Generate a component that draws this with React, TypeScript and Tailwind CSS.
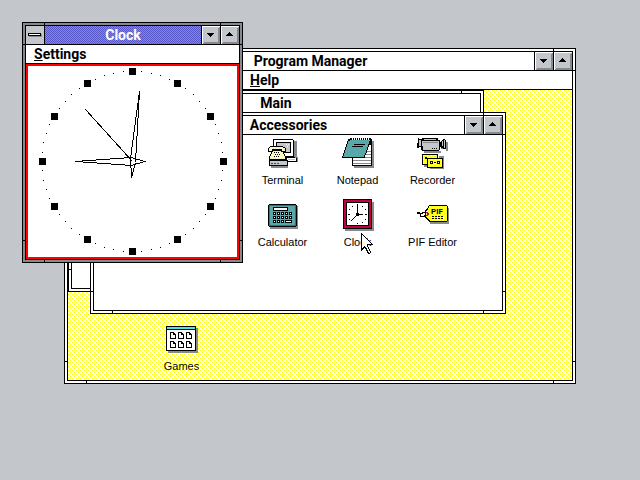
import React from "react";

const INK = "#000000";
const GRAY = "#868a8e";
const SILVER = "#c3c7cb";
const TEAL = "#57a8a8";

function Notches() {
  return (
    <>
      <i className="absolute left-[21px] top-0 h-[3px] w-px bg-black" />
      <i className="absolute right-[21px] top-0 h-[3px] w-px bg-black" />
      <i className="absolute left-[21px] bottom-0 h-[3px] w-px bg-black" />
      <i className="absolute right-[21px] bottom-0 h-[3px] w-px bg-black" />
      <i className="absolute top-[21px] left-0 h-px w-[3px] bg-black" />
      <i className="absolute bottom-[21px] left-0 h-px w-[3px] bg-black" />
      <i className="absolute top-[21px] right-0 h-px w-[3px] bg-black" />
      <i className="absolute bottom-[21px] right-0 h-px w-[3px] bg-black" />
    </>
  );
}

function SystemButton() {
  return (
    <button aria-label="Control menu" className="h-[18px] w-[19px] shrink-0 border-r border-black bg-[#c3c7cb]">
      <svg width="18" height="18" viewBox="0 0 18 18" shapeRendering="crispEdges" aria-hidden="true">
        <path fill={GRAY} d="M3 8h13v3h-13z" />
        <path fill={INK} d="M2 7h13v3h-13z" />
        <path fill="#fff" d="M3 8h11v1h-11z" />
      </svg>
    </button>
  );
}

function ArrowButton({ up = false }: { up?: boolean }) {
  return (
    <button
      aria-label={up ? "Maximize" : "Minimize"}
      className="h-[18px] w-[19px] shrink-0 border-l border-black bg-[#c3c7cb]"
    >
      <svg width="18" height="18" viewBox="0 0 18 18" shapeRendering="crispEdges" aria-hidden="true">
        <path fill="#fff" d="M0 0h18v1h-17v17h-1z" />
        <path fill={GRAY} d="M17 1h1v17h-17v-1h1v-1h14v-14h1z" />
        {up ? (
          <path fill={INK} d="M8 6h1v1h1v1h1v1h1v1h-7v-1h1v-1h1v-1h1z" />
        ) : (
          <path fill={INK} d="M5 7h7v1h-1v1h-1v1h-1v1h-1v-1h-1v-1h-1v-1h-1z" />
        )}
      </svg>
    </button>
  );
}

interface WinProps {
  title: string;
  place: string;
  active?: boolean;
  controls?: boolean;
  children?: React.ReactNode;
}

function Win({ title, place, active = false, controls = true, children }: WinProps) {
  return (
    <section
      aria-label={title}
      className={`absolute border border-black p-[2px] ${active ? "bg-[#868a8e]" : "bg-white"} ${place}`}
    >
      <Notches />
      <div className="flex h-full flex-col border border-black bg-white">
        <header
          className={`flex h-[19px] shrink-0 border-b border-black ${
            active
              ? "bg-[#5757a8] bg-[conic-gradient(#57a8a8_25%,#5757c8_0_50%,#57a8a8_0_75%,#5757c8_0)] bg-[length:2px_2px] text-white"
              : "bg-white text-black"
          }`}
        >
          {controls && <SystemButton />}
          <h2 className="flex-1 text-center text-[14px] leading-[18px] font-bold">{title}</h2>
          {controls && <ArrowButton />}
          {controls && <ArrowButton up />}
        </header>
        {children}
      </div>
    </section>
  );
}

function MenuBar({ label, inset }: { label: string; inset: string }) {
  return (
    <nav className={`flex h-[19px] shrink-0 border-b border-black bg-white ${inset}`}>
      <button className="text-[14px] leading-[18px] font-bold">
        <span className="underline decoration-1 underline-offset-1">{label[0]}</span>
        {label.slice(1)}
      </button>
    </nav>
  );
}

function Launcher({ label, children }: { label: string; children: React.ReactNode }) {
  return (
    <button className="flex w-[75px] flex-col pt-[2px] font-['Liberation_Sans',sans-serif] text-[11px] leading-[16px]">
      <svg
        className="mb-[3px] ml-[22px] shrink-0"
        width="32"
        height="32"
        viewBox="0 0 32 32"
        shapeRendering="crispEdges"
        aria-hidden="true"
      >
        {children}
      </svg>
      <span className="w-full text-center">{label}</span>
    </button>
  );
}

function TerminalIcon() {
  return (
    <>
      <path fill={GRAY} d="M27 4h3v17h-3zM8 20h23v5h-10v6h-17v-2h17v-6h-13z" />
      <path fill={INK} d="M6 2h20v1h1v17h1v1h2v4h-10v-1h-14v-21z" />
      <path fill="#fff" d="M7 3h19v16h-19zM20 21h9v3h-9z" />
      <path fill={INK} d="M9 5h15v11h-15z" />
      <path fill={SILVER} d="M10 6h13v9h-13zM21 22h7v1h-7z" />
      <path fill="#fff" d="M19 7h1v1h-1zM21 7h1v1h-1zM20 9h1v1h-1zM18 11h1v1h-1z" />
      <path fill={INK} d="M3 9h13v1h2v1h1v4h-2v2h1v2h1v4h-17v-4h1v-2h1v-2h-3v-4h1v-1h1z" />
      <path fill="url(#pale)" d="M3 10h13v1h2v3h-3v-2h-10v2h-3v-3h1zM6 14h8v1h2v2h1v2h1v3h-15v-3h1v-2h1v-2h1z" />
      <path fill={INK} d="M7 15h1v1h-1zM9 15h1v1h-1zM11 15h1v1h-1zM8 17h1v1h-1zM10 17h1v1h-1zM12 17h1v1h-1zM7 19h1v1h-1zM9 19h1v1h-1zM11 19h1v1h-1z" />
      <path fill={INK} d="M2 23h19v6h-19z" />
      <path fill={SILVER} d="M3 24h17v4h-17z" />
      <path fill="#e00040" d="M4 26h2v1h-2zM7 26h2v1h-2zM10 26h2v1h-2z" />
    </>
  );
}

function NotepadIcon() {
  return (
    <>
      <path fill={GRAY} d="M29 4h3v27h-20v-2h17z" />
      <path fill={INK} d="M26 2h4v27h-20v-8h11z" />
      <path fill="#fff" d="M27 8h2v20h-18v-7h11z" />
      <path fill={GRAY} d="M25 14h4v1h-4zM24 17h5v1h-5zM23 20h6v1h-6zM11 23h18v1h-18zM11 26h18v1h-18z" />
      <path fill={INK} d="M8 1h21v3h-1v3h-1v3h-1v3h-1v3h-1v2h-1v3h-23v-2h1v-3h1v-3h1v-3h1v-3h1v-3h1v-2h1z" />
      <path fill={TEAL} d="M9 3h19v1h-1v3h-1v3h-1v3h-1v3h-1v2h-1v2h-21v-1h1v-3h1v-3h1v-3h1v-3h1v-3h1z" />
      <path fill="#fff" d="M10 1h1v2h-1zM12 1h1v2h-1zM14 1h1v2h-1zM16 1h1v2h-1zM18 1h1v2h-1zM20 1h1v2h-1zM22 1h1v2h-1zM24 1h1v2h-1zM26 1h1v2h-1z" />
      <path fill={INK} d="M12 7h11v1h-11zM10 9h11v1h-11z" />
    </>
  );
}

function RecorderIcon() {
  return (
    <>
      <path fill={GRAY} d="M7 14h17v2h-17zM24 5h7v9h-2v-2h-5zM22 19h5v13h-14v-2h12zM7 28h3v2h-3z" />
      <path fill={INK} d="M1 1h1v1h3v-1h16v2h2v2h1v-1h1v-1h1v-1h2v1h1v9h-3v-1h-2v-1h-1v3h-1v1h-17v-1h-1v-3h-2v1h-2z" />
      <path fill={SILVER} d="M2 3h2v6h-2zM5 4h17v9h-16v-4h-1zM7 2h12v1h-12zM25 4h1v5h-1zM27 3h1v8h-1z" />
      <path fill={GRAY} d="M6 5h15v1h-15z" />
      <path fill={INK} d="M15 11h1v1h-1zM17 11h1v1h-1zM19 11h1v1h-1z" />
      <path fill={INK} d="M5 17h16v11h-16z" />
      <path fill="url(#yel)" d="M6 18h14v9h-14z" />
      <path fill={INK} d="M8 20h2v2h-2zM10 21h16v10h-16z" />
      <path fill="url(#yel)" d="M11 22h14v8h-14z" />
      <path fill={INK} d="M13 24h3v3h-3zM17 25h2v1h-2zM20 24h3v3h-3z" />
      <path fill="#fff" d="M14 25h1v1h-1zM21 25h1v1h-1z" />
    </>
  );
}

function CalculatorIcon() {
  const keys: [number, number][] = [];
  for (let r = 0; r < 3; r++) for (let c = 0; c < 5; c++) keys.push([6 + c * 4, 13 + r * 4]);
  return (
    <>
      <path fill={GRAY} d="M3 7h28v23h-28z" />
      <path fill={INK} d="M1 6h1v-1h27v1h1v21h-1v1h-27v-1h-1z" />
      <path fill="#5757a8" d="M2 6h27v21h-27z" />
      <path fill={TEAL} d="M3 7h25v19h-25z" />
      <path fill={INK} d="M6 8h15v4h-15z" />
      <path fill="#fff" d="M7 9h13v2h-13z" />
      {keys.map(([x, y]) => (
        <g key={`${x}-${y}`}>
          <rect x={x} y={y} width="3" height="3" fill={INK} />
          <rect x={x + 1} y={y + 1} width="1" height="1" fill="#fff" />
        </g>
      ))}
      <path fill={INK} d="M18 21h7v3h-7z" />
      <path fill="#fff" d="M19 22h5v1h-5z" />
    </>
  );
}

function ClockIcon() {
  return (
    <>
      <path fill={GRAY} d="M3 3h29v29h-29z" />
      <path fill={INK} d="M1 0h29v30h-29z" />
      <path fill="#c00040" d="M2 1h27v28h-27z" />
      <path fill={INK} d="M4 3h23v24h-23z" />
      <path fill="#fff" d="M5 4h21v22h-21z" />
      <path fill={INK} d="M15 5h1v9h1v1h4v1h-4v1h-3v-3h1zM13 17h1v1h-1zM12 18h1v1h-1zM11 19h1v1h-1zM10 20h1v1h-1zM9 21h1v1h-1zM15 24h1v1h-1zM6 15h2v1h-2zM23 15h2v1h-2zM10 7h1v1h-1zM20 7h1v1h-1zM7 10h1v1h-1zM23 10h1v1h-1zM7 20h1v1h-1zM23 20h1v1h-1zM20 23h1v1h-1z" />
    </>
  );
}

function PifIcon() {
  return (
    <>
      <path fill={GRAY} d="M13 9h19v16h-19z" />
      <path fill={INK} d="M12 6h18v1h1v15h-1v1h-18v-1h-1v-1h-1v-1h-1v-1h-1v-8h1v-1h1v-1h1v-2h1z" />
      <path fill="url(#yel)" d="M12 7h18v15h-17v-1h-1v-1h-1v-1h-1v-1h-1v-6h1v-1h1v-2h1z" />
      <path fill={INK} d="M0 13h3v1h2v-1h5v1h-4v1h-2v3h-1v-3h-3zM4 17h3v-1h3v1h-2v1h-4z" />
      <path fill="#c00057" d="M9 13h2v1h1v2h-1v1h-2v-1h1v-2h-1z" />
      <path fill={INK} d="M15 17h2v1h-2zM18 17h2v1h-2zM21 17h2v1h-2zM24 17h2v1h-2zM15 19h2v1h-2zM18 19h2v1h-2zM21 19h2v1h-2zM24 19h2v1h-2z" />
      <text x="14" y="15" fontFamily="Roboto, sans-serif" fontSize="8" fontWeight="700" fill={INK}>PIF</text>
    </>
  );
}

function GroupIcon() {
  const docs: [number, number][] = [[4, 8], [12, 8], [20, 8], [4, 17], [12, 17], [20, 17]];
  return (
    <>
      <path fill={GRAY} d="M2 5h30v25h-30z" />
      <path fill={INK} d="M0 3h30v25h-30z" />
      <path fill="#4fe3e3" d="M1 4h28v2h-28z" />
      <path fill="#fff" d="M1 7h28v20h-28z" />
      {docs.map(([x, y]) => (
        <g key={`${x}-${y}`} transform={`translate(${x} ${y + 1})`}>
          <path fill={INK} d="M0 0h4v1h1v1h1v5h-6z" />
          <path fill="#fff" d="M1 1h2v2h2v3h-4z" />
        </g>
      ))}
    </>
  );
}

function ClockFace() {
  const marks = Array.from({ length: 60 }, (_, i) => {
    const a = (i * Math.PI) / 30;
    return {
      big: i % 5 === 0,
      x: 104 + Math.round(90.5 * Math.sin(a)),
      y: 95 - Math.round(90 * Math.cos(a)),
    };
  });
  return (
    <svg
      className="min-h-0 w-full flex-1 border-2 border-[#ff0000] bg-white"
      viewBox="0 0 209 191"
      shapeRendering="crispEdges"
      role="img"
      aria-label="Analog clock"
    >
      {marks.map((m, i) =>
        m.big ? (
          <rect key={i} x={m.x - 3} y={m.y - 3} width="7" height="7" />
        ) : (
          <rect key={i} x={m.x} y={m.y} width="1" height="1" />
        ),
      )}
      <g fill="none" stroke={INK} strokeWidth="1">
        <path d="M57.5 43.5L104.5 95.5" />
        <path d="M111.5 25.5L102.5 92.5L103.5 111.5L107.5 96.5Z" />
        <path d="M47.5 95.5L103.5 91.5L116.5 95.5L103.5 99.5Z" />
      </g>
    </svg>
  );
}

function Pointer() {
  return (
    <svg
      className="pointer-events-none absolute left-[361px] top-[233px]"
      width="13"
      height="21"
      viewBox="0 0 13 21"
      shapeRendering="crispEdges"
      aria-hidden="true"
    >
      <path
        fill={INK}
        d="M0 0h1v1h1v1h1v1h1v1h1v1h1v1h1v1h1v1h1v1h1v1h1v1h1v1h-5v2h1v2h1v2h1v2h-1v1h-2v-1h-1v-2h-1v-2h-1v-1h-1v1h-1v1h-1v1h-1z"
      />
      <path
        fill="#fff"
        d="M1 2h1v1h1v1h1v1h1v1h1v1h1v1h1v1h1v1h1v1h-4v3h1v2h1v2h1v2h-1v-1h-1v-2h-1v-2h-1v-1h-1v-1h-1v1h-1v1h-1z"
      />
    </svg>
  );
}

export default function App() {
  return (
    <main className="relative h-screen w-full overflow-hidden bg-[#c3c7cb] font-[Roboto,'Liberation_Sans',sans-serif] text-black">
      <svg className="absolute h-0 w-0" aria-hidden="true">
        <defs>
          <pattern id="pale" width="2" height="2" patternUnits="userSpaceOnUse">
            <path fill="#ffff57" d="M0 0h2v2h-2z" />
            <path fill="#ffffd0" d="M0 0h1v1h-1zM1 1h1v1h-1z" />
          </pattern>
          <pattern id="yel" width="4" height="4" patternUnits="userSpaceOnUse">
            <path fill="#ffff20" d="M0 0h4v4h-4z" />
            <path fill="#ffffc0" d="M0 0h1v1h-1zM2 2h1v1h-1z" />
          </pattern>
          <pattern id="weave" width="8" height="8" patternUnits="userSpaceOnUse">
            <path fill="#fff" d="M0 0h8v8h-8z" />
            <path
              fill="#ffff00"
              d="M0 0h1v1h-1zM4 0h1v1h-1zM2 2h1v1h-1zM6 2h1v1h-1zM0 4h1v1h-1zM4 4h1v1h-1zM2 6h1v1h-1zM6 6h1v1h-1z"
            />
            <path fill="#ffff66" d="M2 0h1v1h-1zM6 4h1v1h-1z" />
          </pattern>
        </defs>
      </svg>

      <Win title="Program Manager" place="left-[64px] top-[48px] h-[336px] w-[512px]">
        <MenuBar label="Help" inset="pl-[182px]" />
        <div className="relative flex min-h-0 flex-1 items-end pb-[6px] pl-[76px]">
          <svg className="absolute inset-0 h-full w-full" shapeRendering="crispEdges" aria-hidden="true">
            <rect width="100%" height="100%" fill="url(#weave)" />
          </svg>
          <div className="relative">
            <Launcher label="Games"><GroupIcon /></Launcher>
          </div>
          <Win title="Main" place="left-0 top-0 h-[202px] w-[416px]" controls={false} />
          <Win title="Accessories" place="left-[22px] top-[22px] h-[202px] w-[416px]">
            <div className="flex flex-wrap gap-y-[9px] pl-[151px]">
              <Launcher label="Terminal"><TerminalIcon /></Launcher>
              <Launcher label="Notepad"><NotepadIcon /></Launcher>
              <Launcher label="Recorder"><RecorderIcon /></Launcher>
              <Launcher label="Calculator"><CalculatorIcon /></Launcher>
              <Launcher label="Clock"><ClockIcon /></Launcher>
              <Launcher label="PIF Editor"><PifIcon /></Launcher>
            </div>
          </Win>
        </div>
      </Win>

      <Win title="Clock" active place="left-[22px] top-[22px] h-[241px] w-[221px]">
        <MenuBar label="Settings" inset="pl-[8px]" />
        <ClockFace />
      </Win>

      <Pointer />
    </main>
  );
}
